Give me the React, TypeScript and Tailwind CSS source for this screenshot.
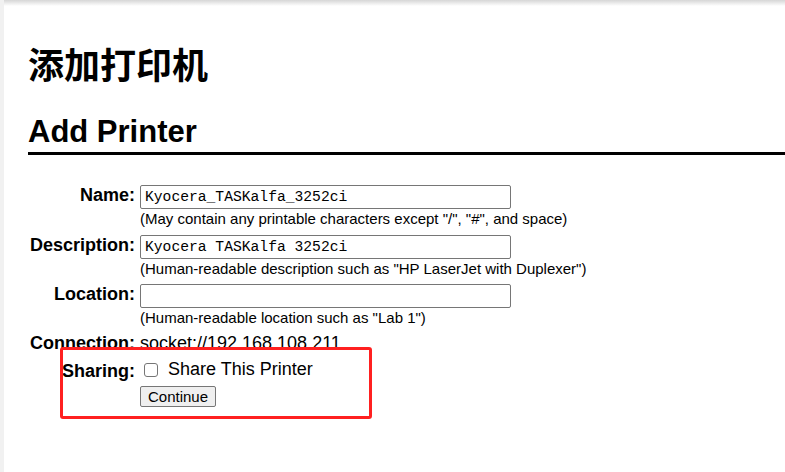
import React from "react";

const Row = ({
  label,
  children,
  className = "",
}: {
  label: string;
  children: React.ReactNode;
  className?: string;
}) => (
  <div className={`flex items-baseline ${className}`}>
    <div className="w-[107px] shrink-0 text-right font-bold text-[18px] leading-[21px]">
      {label}
    </div>
    <div className="ml-[5px] flex flex-col">{children}</div>
  </div>
);

const TextInput = ({ value }: { value: string }) => (
  <input
    type="text"
    defaultValue={value}
    className="w-[371px] h-[24px] border border-[#767676] rounded-[2px] px-[4px] text-[14.67px] text-black bg-white outline-none"
    style={{ fontFamily: '"Liberation Mono", "DejaVu Sans Mono", monospace' }}
  />
);

const Help = ({ children }: { children: React.ReactNode }) => (
  <p className="text-[15px] leading-[17px] mt-[1px]">{children}</p>
);

export default function App() {
  return (
    <div
      className="relative w-[785px] h-[472px] overflow-hidden bg-white text-black flex"
      style={{ fontFamily: '"Liberation Sans", Arial, "Noto Sans CJK SC", sans-serif' }}
    >
      <div className="w-[4px] shrink-0 bg-[#f1f1f1]" />
      <div className="flex-1 flex flex-col">
        <div className="h-[6px] bg-gradient-to-b from-[#d6d6d6] to-white" />
        <div className="pl-[24px]">
          <h1
            className="mt-[37px] text-[36px] leading-[41px] font-bold"
            style={{ fontFamily: '"Noto Sans CJK SC", "Liberation Sans", sans-serif' }}
          >
            添加打印机
          </h1>
          <h2 className="mt-[30px] text-[31px] leading-[36px] font-bold pb-[2px] border-b-[3px] border-black">
            Add Printer
          </h2>

          <div className="mt-[30px] flex flex-col">
            <Row label="Name:">
              <TextInput value="Kyocera_TASKalfa_3252ci" />
              <Help>(May contain any printable characters except "/", "#", and space)</Help>
            </Row>
            <Row label="Description:" className="mt-[8px]">
              <TextInput value="Kyocera TASKalfa 3252ci" />
              <Help>(Human-readable description such as "HP LaserJet with Duplexer")</Help>
            </Row>
            <Row label="Location:" className="mt-[7px]">
              <TextInput value="" />
              <Help>(Human-readable location such as "Lab 1")</Help>
            </Row>
            <Row label="Connection:" className="mt-[7px]">
              <span className="text-[18px] leading-[21px]">socket://192.168.108.211</span>
            </Row>
            <Row label="Sharing:" className="mt-[5px]">
              <label className="flex items-center text-[18px] leading-[21px]">
                <span className="inline-block w-[14px] h-[14px] ml-[4px] mr-[10px] border border-[#767676] rounded-[3px] bg-white" />
                Share This Printer
              </label>
            </Row>
            <div className="mt-[3px] ml-[112px]">
              <button className="w-[76px] h-[21px] border border-[#767676] rounded-[2px] bg-[#efefef] text-[15px] leading-[17px] text-black">
                Continue
              </button>
            </div>
          </div>
        </div>
      </div>

      <div className="absolute left-[60px] top-[347px] w-[312px] h-[72px] border-[3px] border-[#ff2020] rounded-[3px]" />
    </div>
  );
}
